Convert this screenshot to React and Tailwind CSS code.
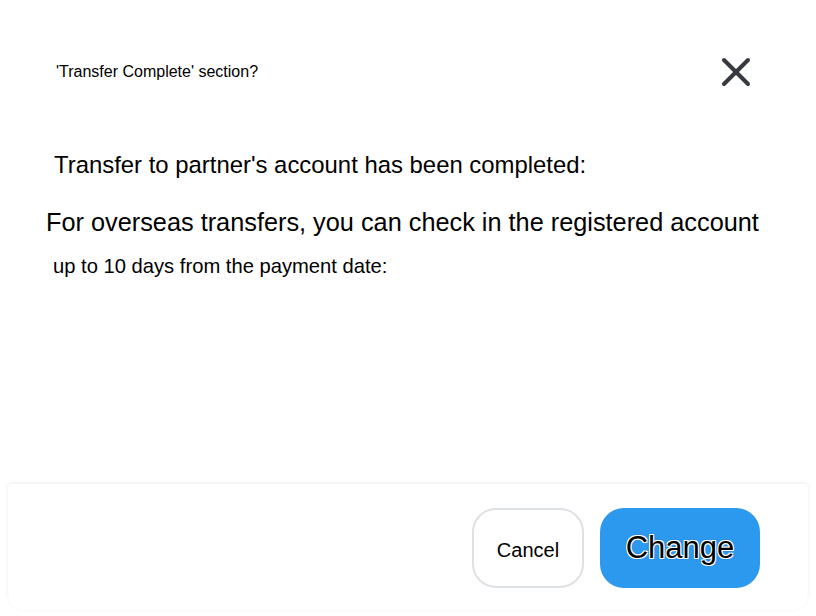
import React from 'react';

export default function App() {
  return (
    <div className="w-[816px] h-[616px] bg-white flex flex-col overflow-hidden font-['Liberation_Sans',Arial,sans-serif] text-black">
      {/* header */}
      <div className="flex items-center justify-between h-12 mt-12 pl-[56px] pr-[56px]">
        <h2 className="text-[16px] leading-5">'Transfer Complete' section?</h2>
        <button className="w-12 h-12 flex items-center justify-center text-[#36393f]">
          <svg width="48" height="48" viewBox="0 0 24 24" fill="none" stroke="currentColor" strokeWidth="2" strokeLinecap="round">
            <path d="M18 6 6 18" />
            <path d="M6 6l12 12" />
          </svg>
        </button>
      </div>

      {/* body */}
      <p className="mt-[53px] pl-[54px] text-[23.9px] leading-8">Transfer to partner's account has been completed:</p>
      <p className="mt-[25px] pl-[46px] text-[25.3px] leading-8">For overseas transfers, you can check in the registered account</p>
      <p className="mt-[14px] pl-[53px] text-[20.2px] leading-7">up to 10 days from the payment date:</p>

      {/* footer */}
      <div className="mt-auto mb-1.5 mx-2 h-[126px] bg-white rounded-b-2xl rounded-t shadow-[0_-1px_4px_rgba(0,0,0,0.08)] flex justify-end items-start gap-4 pt-6 pr-12">
        <button className="w-[112px] h-20 pt-1 rounded-3xl border-2 border-[#dde0e5] bg-white text-[20px]">Cancel</button>
        <button className="w-40 h-20 rounded-3xl bg-[#2c98ee] text-[31px] [text-shadow:-1px_-1px_0_#fff,1px_-1px_0_#fff,-1px_1px_0_#fff,1px_1px_0_#fff,0_0_2px_#000]">Change</button>
      </div>
    </div>
  );
}
